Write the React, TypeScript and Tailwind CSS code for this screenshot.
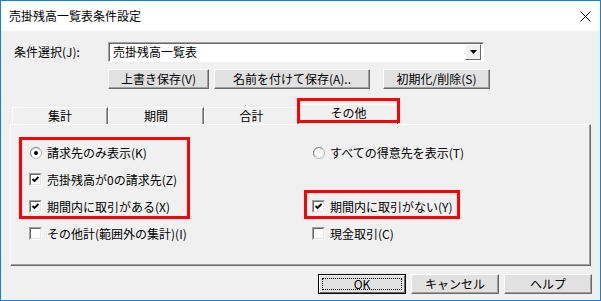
import React from "react"

const font = { fontFamily: '"Noto Sans CJK JP", "MS UI Gothic", sans-serif' }

function Button({ label, w, isDefault }: { label: string; w: string; isDefault?: boolean }) {
  if (isDefault) {
    return (
      <div className={`${w} h-[20px] border border-black`}>
        <div className="w-full h-full border-t border-l border-white border-b border-r border-b-[#696969] border-r-[#696969] bg-[#e1e1e1] flex items-center justify-center p-[2px]">
          <div className="w-full h-full border border-dotted border-black flex items-center justify-center text-[12px] leading-none">
            {label}
          </div>
        </div>
      </div>
    )
  }
  return (
    <div
      className={`${w} h-[20px] border-t border-l border-white border-b border-r border-b-[#696969] border-r-[#696969] shadow-[inset_-1px_-1px_#a0a0a0] bg-[#e1e1e1] flex items-center justify-center text-[12px] leading-none`}
    >
      {label}
    </div>
  )
}

function Checkbox({ checked, label }: { checked?: boolean; label: string }) {
  return (
    <div className="flex items-center gap-[5px]">
      <div className="w-[13px] h-[13px] border-t border-l border-[#a0a0a0] border-b border-r border-b-white border-r-white">
        <div className="w-full h-full border-t border-l border-[#696969] border-b border-r border-b-[#e3e3e3] border-r-[#e3e3e3] bg-white">
          {checked && (
            <svg width="9" height="9" viewBox="0 0 9 9">
              <path d="M1.5 4 L3.5 6 L7.5 2" stroke="#000" strokeWidth="1.8" fill="none" />
            </svg>
          )}
        </div>
      </div>
      <span className="text-[12px] leading-none whitespace-nowrap">{label}</span>
    </div>
  )
}

function Radio({ checked, label }: { checked?: boolean; label: string }) {
  return (
    <div className="flex items-center gap-[5px] pl-[1px]">
      <svg width="12" height="12" viewBox="0 0 12 12">
        <circle cx="6" cy="6" r="5.5" fill="#fff" stroke="#b4b4b4" />
        <path d="M2.1 9.9 A5.5 5.5 0 0 1 9.9 2.1" stroke="#8a8a8a" fill="none" />
        {checked && <circle cx="6" cy="6" r="2" fill="#000" />}
      </svg>
      <span className="text-[12px] leading-none whitespace-nowrap">{label}</span>
    </div>
  )
}

function Tab({ label, w }: { label: string; w: string }) {
  return (
    <div
      className={`${w} h-[17px] border-t border-l border-white border-r border-r-[#696969] shadow-[inset_-1px_0_#a0a0a0] flex items-center justify-center text-[12px] leading-none`}
    >
      {label}
    </div>
  )
}

export default function App() {
  return (
    <div
      className="w-[601px] h-[301px] border border-[#1c7fd6] bg-[#f0f0f0] flex flex-col text-black"
      style={font}
    >
      {/* title bar */}
      <div className="h-[30px] bg-white flex items-center justify-between pl-[8px] pr-[9px]">
        <span className="text-[12px] leading-none">売掛残高一覧表条件設定</span>
        <svg width="11" height="11" viewBox="0 0 11 11">
          <path d="M0.5 0.5 L10.5 10.5 M10.5 0.5 L0.5 10.5" stroke="#000" strokeWidth="1" />
        </svg>
      </div>

      <div className="relative flex-1 flex flex-col pl-[9px]">
        {/* condition select */}
        <div className="flex items-center mt-[11px] pl-[4px]">
          <span className="w-[94px] text-[12px] leading-none">条件選択(J):</span>
          <div className="w-[376px] h-[20px] border-t border-l border-[#a0a0a0] border-b border-r border-b-white border-r-white shadow-[inset_1px_1px_#696969] bg-white flex items-center justify-between pl-[4px] pr-[2px]">
            <span className="text-[12px] leading-none">売掛残高一覧表</span>
            <div className="w-[16px] h-[16px] border-t border-l border-white border-b border-r border-b-[#696969] border-r-[#696969] bg-[#f0f0f0] flex items-center justify-center">
              <svg width="7" height="4" viewBox="0 0 7 4">
                <path d="M0 0 H7 L3.5 4 Z" fill="#000" />
              </svg>
            </div>
          </div>
        </div>

        {/* save buttons */}
        <div className="flex mt-[7px] pl-[98px] gap-[5px]">
          <Button label="上書き保存(V)" w="w-[101px]" />
          <Button label="名前を付けて保存(A).." w="w-[156px]" />
          <div className="w-[3px]" />
          <Button label="初期化/削除(S)" w="w-[107px]" />
        </div>

        {/* tabs */}
        <div className="flex mt-[15px] pl-[2px] items-end">
          <Tab label="集計" w="w-[96px]" />
          <Tab label="期間" w="w-[96px]" />
          <Tab label="合計" w="w-[95px]" />
          <div className="w-[99px] h-[20px] border-t border-l border-white border-r border-r-[#696969] flex items-center justify-center text-[12px] leading-none pb-[3px]">
            その他
          </div>
        </div>

        {/* panel */}
        <div className="relative w-[581px] h-[142px] border-t border-l border-white border-b border-r border-b-[#696969] border-r-[#696969] shadow-[inset_-1px_-1px_#a0a0a0] pt-[14px] pl-[18px]">
          <div className="grid grid-cols-[283px_1fr] auto-rows-[27px] items-center">
            <Radio checked label="請求先のみ表示(K)" />
            <Radio label="すべての得意先を表示(T)" />
            <Checkbox checked label="売掛残高が0の請求先(Z)" />
            <div />
            <Checkbox checked label="期間内に取引がある(X)" />
            <Checkbox checked label="期間内に取引がない(Y)" />
            <Checkbox label="その他計(範囲外の集計)(I)" />
            <Checkbox label="現金取引(C)" />
          </div>
          <div className="absolute left-[8px] top-[12px] w-[171px] h-[82px] border-[3px] border-[#ff0000]" />
          <div className="absolute left-[293px] top-[65px] w-[156px] h-[29px] border-[3px] border-[#ff0000]" />
        </div>

        {/* bottom buttons */}
        <div className="flex justify-end w-[582px] gap-[5px] mt-[8px]">
          <Button label="OK" w="w-[88px]" isDefault />
          <Button label="キャンセル" w="w-[88px]" />
          <Button label="ヘルプ" w="w-[88px]" />
        </div>

        <div className="absolute left-[296px] top-[67px] w-[103px] h-[25px] border-[3px] border-[#ff0000]" />
      </div>
    </div>
  )
}
